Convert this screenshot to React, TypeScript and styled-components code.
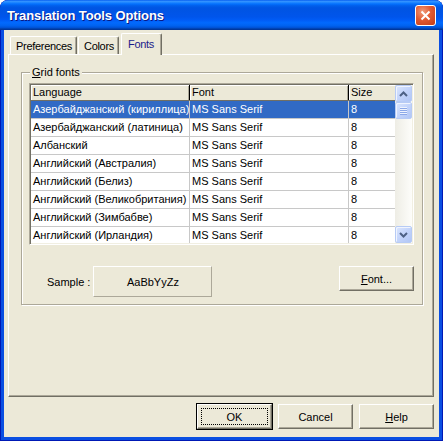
import React from 'react'
import styled, { createGlobalStyle, css } from 'styled-components'

const GlobalStyle = createGlobalStyle`
  html, body { margin: 0; padding: 0; background: #ffffff; }
  body {
    width: 443px;
    height: 441px;
    overflow: hidden;
    font-family: 'Liberation Sans', Arial, sans-serif;
    font-size: 11px;
    color: #000000;
  }
  * { box-sizing: border-box; }
`

const Window = styled.div`
  width: 443px;
  height: 441px;
  display: flex;
  flex-direction: column;
  background: #0a4fe2;
  border-radius: 8px 8px 0 0;
  box-shadow: inset 1px 0 #0019b5, inset -1px 0 #0019b5, inset 0 -1px #0019b5;
  overflow: hidden;
`

const TitleBar = styled.div`
  height: 30px;
  flex: none;
  display: flex;
  align-items: center;
  padding: 1px 6px 0 7px;
  border-radius: 8px 8px 0 0;
  background: linear-gradient(
    to bottom,
    #0058ee 0%,
    #3593ff 4%,
    #288eff 7%,
    #127dff 10%,
    #036ffc 14%,
    #0262ee 18%,
    #0057e5 24%,
    #0054e3 30%,
    #0055eb 56%,
    #005bf5 66%,
    #026afe 76%,
    #0062ef 86%,
    #0052d6 92%,
    #0040ab 96%,
    #003092 100%
  );
`

const TitleText = styled.span`
  color: #ffffff;
  font-family: 'Liberation Sans', Arial, sans-serif;
  font-weight: bold;
  font-size: 13px;
  letter-spacing: -0.1px;
  text-shadow: 1px 1px 0 #0a1883;
`

const CloseButton = styled.div`
  margin-left: auto;
  margin-right: 1px;
  width: 21px;
  height: 21px;
  border: 1px solid #ffffff;
  border-radius: 3px;
  display: flex;
  align-items: center;
  justify-content: center;
  background: radial-gradient(circle at 35% 30%, #f09c7c 0%, #e25a32 45%, #c43c16 100%);
`

const Content = styled.div`
  flex: 1;
  margin: 0 4px 4px;
  padding: 3px 5px 8px 4px;
  background: #ece9d8;
  display: flex;
  flex-direction: column;
`

const TabStrip = styled.div`
  height: 22px;
  flex: none;
  display: flex;
  align-items: flex-end;
  padding-left: 2px;
  margin-bottom: -1px;
  position: relative;
  z-index: 1;
`

const Tab = styled.div<{ $active?: boolean }>`
  height: 18px;
  margin-bottom: 1px;
  margin-right: 1px;
  padding: 2px 4px 0 5px;
  background: #ece9d8;
  border-top: 1px solid #ffffff;
  border-left: 1px solid #ffffff;
  border-right: 1px solid #716f64;
  box-shadow: inset -1px 0 #aca899;
  border-radius: 2px 2px 0 0;
  line-height: 14px;
  letter-spacing: -0.3px;
  white-space: nowrap;
  ${({ $active }) =>
    $active &&
    css`
      height: 22px;
      margin-bottom: 0;
      margin-left: 1px;
      padding: 3px 7px 0 6px;
      color: #1b1b8a;
    `}
`

const Panel = styled.div`
  height: 343px;
  flex: none;
  padding: 17px 10px 0 12px;
  border-top: 1px solid #ffffff;
  border-left: 1px solid #ffffff;
  border-right: 1px solid #716f64;
  border-bottom: 1px solid #716f64;
  box-shadow: inset -1px -1px 0 #aca899;
`

const GroupBox = styled.div`
  position: relative;
  padding: 10px 8px 7px 7px;
  border: 1px solid #aca899;
  box-shadow: 1px 1px 0 #ffffff, inset 1px 1px 0 #ffffff;
`

const GroupLabel = styled.span`
  position: absolute;
  top: -7px;
  left: 8px;
  padding: 0 2px;
  background: #ece9d8;
  line-height: 13px;
`

const Grid = styled.div`
  height: 162px;
  display: flex;
  background: #ffffff;
  border-top: 1px solid #aca899;
  border-left: 1px solid #aca899;
  border-right: 1px solid #ffffff;
  border-bottom: 1px solid #ffffff;
  box-shadow: inset 1px 1px 0 #716f64, inset -1px -1px 0 #f1efe2;
  padding: 1px;
  overflow: hidden;
`

const Table = styled.div`
  flex: 1;
  display: flex;
  flex-direction: column;
  overflow: hidden;
`

const columns = '159px 159px 1fr'

const HeaderRow = styled.div`
  display: grid;
  grid-template-columns: ${columns};
  height: 16px;
  flex: none;
  background: #ece9d8;
  border-bottom: 1px solid #716f64;
`

const HeaderCell = styled.div`
  padding-left: 2px;
  line-height: 14px;
  border-right: 1px solid #000000;
  box-shadow: inset 1px 1px 0 #ffffff, inset -1px 0 0 #aca899;
  overflow: hidden;
  white-space: nowrap;
  &:last-child {
    border-right: none;
    box-shadow: inset 1px 1px 0 #ffffff;
  }
`

const Row = styled.div<{ $selected?: boolean }>`
  display: grid;
  grid-template-columns: ${columns};
  height: 18px;
  flex: none;
  border-bottom: 1px solid #c8c8c8;
  ${({ $selected }) =>
    $selected &&
    css`
      background: #316ac5;
      color: #ffffff;
    `}
`

const Cell = styled.div`
  padding-left: 2px;
  line-height: 17px;
  border-right: 1px solid #c8c8c8;
  overflow: hidden;
  white-space: nowrap;
  &:last-child {
    border-right: none;
  }
`

const ScrollBar = styled.div`
  width: 17px;
  flex: none;
  display: flex;
  flex-direction: column;
  background: linear-gradient(to right, #eeede5, #fdfdfa);
`

const ScrollButton = styled.div`
  height: 17px;
  flex: none;
  display: flex;
  align-items: center;
  justify-content: center;
  border: 1px solid #b7cbf5;
  border-radius: 2px;
  background: linear-gradient(135deg, #dbe6fd 0%, #c3d4fb 50%, #b1c6f5 100%);
  box-shadow: inset 1px 1px 0 #f0f4fe;
`

const Thumb = styled(ScrollButton)`
  flex-direction: column;
  gap: 1px;
`

const Grip = styled.div`
  width: 7px;
  height: 1px;
  background: #eef3fe;
  box-shadow: 0 1px 0 #8ca8e8;
`

const Track = styled.div`
  flex: 1;
`

const SampleRow = styled.div`
  display: flex;
  align-items: center;
  margin-top: 21px;
  height: 31px;
`

const SampleLabel = styled.span`
  margin-left: 18px;
  margin-right: 3px;
`

const SampleBox = styled.div`
  width: 119px;
  height: 31px;
  display: flex;
  align-items: center;
  justify-content: center;
  border-top: 1px solid #ffffff;
  border-left: 1px solid #ffffff;
  border-right: 1px solid #aca899;
  border-bottom: 1px solid #aca899;
`

const Button = styled.div<{ $default?: boolean }>`
  width: 75px;
  height: 25px;
  display: flex;
  align-items: center;
  justify-content: center;
  position: relative;
  background: #ece9d8;
  border-top: 1px solid #ffffff;
  border-left: 1px solid #ffffff;
  border-right: 1px solid #716f64;
  border-bottom: 1px solid #716f64;
  box-shadow: inset -1px -1px 0 #aca899;
  ${({ $default }) =>
    $default &&
    css`
      outline: 1px solid #000000;
      outline-offset: 0;
    `}
`

const FocusRing = styled.span`
  position: absolute;
  inset: 3px;
  border: 1px dotted #000000;
`

const FontButton = styled(Button)`
  margin-left: auto;
  align-self: flex-start;
`

const ButtonRow = styled.div`
  display: flex;
  justify-content: flex-end;
  gap: 6px;
  margin-top: 7px;
  height: 25px;
`

const U = styled.span`
  text-decoration: underline;
  text-underline-offset: 1px;
`

const rows = [
  'Азербайджанский (кириллица)',
  'Азербайджанский (латиница)',
  'Албанский',
  'Английский (Австралия)',
  'Английский (Белиз)',
  'Английский (Великобритания)',
  'Английский (Зимбабве)',
  'Английский (Ирландия)',
]

const Chevron = ({ down }: { down?: boolean }) => (
  <svg width="9" height="6" viewBox="0 0 9 6">
    <polyline
      points={down ? '1,1 4.5,4.5 8,1' : '1,5 4.5,1.5 8,5'}
      fill="none"
      stroke="#4d6185"
      strokeWidth="2"
    />
  </svg>
)

const App = () => (
  <>
    <GlobalStyle />
    <Window>
      <TitleBar>
        <TitleText>Translation Tools Options</TitleText>
        <CloseButton>
          <svg width="11" height="11" viewBox="0 0 11 11">
            <path d="M1.5 1.5 L9.5 9.5 M9.5 1.5 L1.5 9.5" stroke="#ffffff" strokeWidth="2" />
          </svg>
        </CloseButton>
      </TitleBar>
      <Content>
        <TabStrip>
          <Tab>Preferences</Tab>
          <Tab>Colors</Tab>
          <Tab $active>Fonts</Tab>
        </TabStrip>
        <Panel>
          <GroupBox>
            <GroupLabel>
              <U>G</U>rid fonts
            </GroupLabel>
            <Grid>
              <Table>
                <HeaderRow>
                  <HeaderCell>Language</HeaderCell>
                  <HeaderCell>Font</HeaderCell>
                  <HeaderCell>Size</HeaderCell>
                </HeaderRow>
                {rows.map((lang, i) => (
                  <Row key={lang} $selected={i === 0}>
                    <Cell>{lang}</Cell>
                    <Cell>MS Sans Serif</Cell>
                    <Cell>8</Cell>
                  </Row>
                ))}
              </Table>
              <ScrollBar>
                <ScrollButton>
                  <Chevron />
                </ScrollButton>
                <Thumb>
                  <Grip />
                  <Grip />
                  <Grip />
                  <Grip />
                </Thumb>
                <Track />
                <ScrollButton>
                  <Chevron down />
                </ScrollButton>
              </ScrollBar>
            </Grid>
            <SampleRow>
              <SampleLabel>Sample :</SampleLabel>
              <SampleBox>AaBbYyZz</SampleBox>
              <FontButton>
                <span>
                  <U>F</U>ont...
                </span>
              </FontButton>
            </SampleRow>
          </GroupBox>
        </Panel>
        <ButtonRow>
          <Button $default>
            <FocusRing />
            OK
          </Button>
          <Button>Cancel</Button>
          <Button>
            <span>
              <U>H</U>elp
            </span>
          </Button>
        </ButtonRow>
      </Content>
    </Window>
  </>
)

export default App
